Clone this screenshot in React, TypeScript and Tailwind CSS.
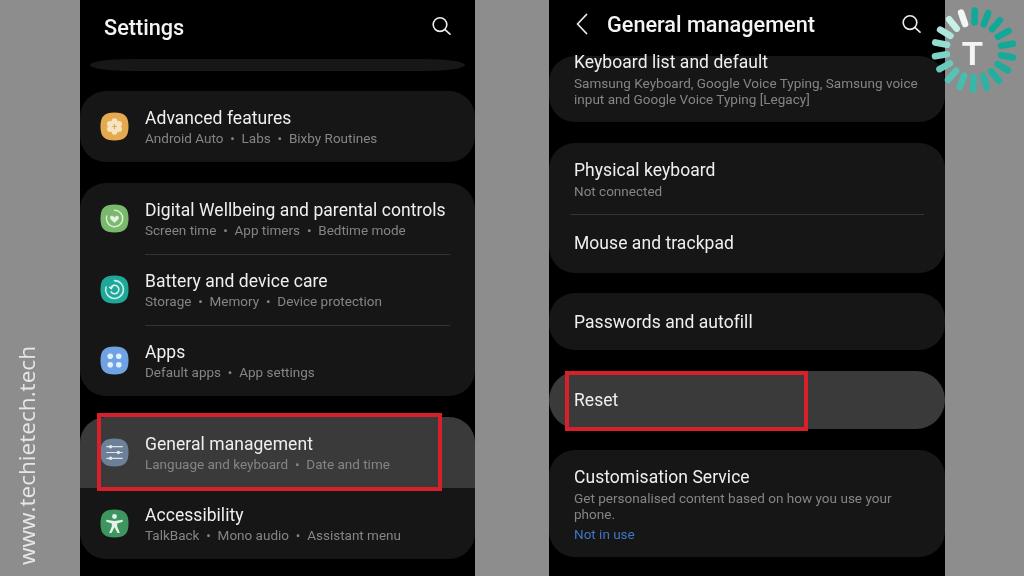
import React from "react";

const Search = () => (
  <svg width="19" height="18" viewBox="0 0 19 18" fill="none" stroke="#ededed" strokeWidth="1.6" strokeLinecap="round">
    <circle cx="8" cy="7.6" r="6.8" />
    <path d="M13 12.6l5 4.6" />
  </svg>
);

const Squircle = ({ color, children }: { color: string; children: React.ReactNode }) => (
  <svg width="29" height="29" viewBox="0 0 30 30" className="shrink-0">
    <path d="M15 0.5C25.5 0.5 29.5 4.5 29.5 15S25.5 29.5 15 29.5 0.5 25.5 0.5 15 4.5 0.5 15 0.5Z" fill={color} />
    {children}
  </svg>
);

const Advanced = () => (
  <Squircle color="#e5a94f">
    <g fill="#f6e3c0">
      <circle cx="15" cy="9.6" r="3.1" />
      <circle cx="15" cy="20.4" r="3.1" />
      <circle cx="10.3" cy="12.3" r="3.1" />
      <circle cx="19.7" cy="12.3" r="3.1" />
      <circle cx="10.3" cy="17.7" r="3.1" />
      <circle cx="19.7" cy="17.7" r="3.1" />
      <circle cx="15" cy="15" r="4" />
    </g>
    <path d="M15 12.5v5M12.5 15h5" stroke="#d9a95a" strokeWidth="1.1" />
  </Squircle>
);
const Wellbeing = () => (
  <Squircle color="#79b86d">
    <path d="M15 6.5a8.5 8.5 0 1 1-8.1 6" fill="none" stroke="#d8edd2" strokeWidth="1.6" strokeLinecap="round" />
    <path d="M15 19.6l-4-3.9c-1.9-2.1 1-4.8 3-2.8l1 1 1-1c2-2 4.9.7 3 2.8z" fill="#e4f2e0" />
  </Squircle>
);
const Battery = () => (
  <Squircle color="#1fa898">
    <path d="M15 5.8a9.2 9.2 0 1 1-8.8 6.6" fill="none" stroke="#c9efe9" strokeWidth="1.6" strokeLinecap="round" />
    <path d="M11.2 13a4.4 4.4 0 1 1 .2 4.4" fill="none" stroke="#d9f5f0" strokeWidth="1.6" strokeLinecap="round" />
    <path d="M9.8 12.6l2 1.6 1.2-2.4" fill="none" stroke="#d9f5f0" strokeWidth="1.3" strokeLinecap="round" />
  </Squircle>
);
const Apps = () => (
  <Squircle color="#6fa2e2">
    <g fill="#e3eefb">
      <circle cx="10.6" cy="10.6" r="2.9" />
      <circle cx="19.4" cy="10.6" r="2.9" />
      <circle cx="10.6" cy="19.4" r="2.9" />
      <circle cx="19.4" cy="19.4" r="2.9" />
    </g>
  </Squircle>
);
const General = () => (
  <Squircle color="#6c8098">
    <g stroke="#dfe5ec" strokeWidth="1.2" strokeLinecap="round" fill="#dfe5ec">
      <path d="M7 9h16M7 15h16M7 21h16" fill="none" />
      <circle cx="11" cy="9" r="1.2" />
      <circle cx="19" cy="15" r="1.2" />
      <circle cx="11" cy="21" r="1.2" />
    </g>
  </Squircle>
);
const Access = () => (
  <Squircle color="#3e9560">
    <circle cx="15" cy="7.8" r="2.5" fill="#e4f2e8" />
    <path d="M6.5 11l8.5 1.5 8.5-1.5v2.2l-5.7 1.8v3.2l2.7 6.6h-2.4L15 18.9l-3.100 5.900H9.500l2.700-6.600V15L6.500 13.200z" fill="#e4f2e8" />
  </Squircle>
);

const Sub = ({ items }: { items: string[] }) => (
  <div className="text-[13.5px] leading-[16px] text-[#858585] whitespace-nowrap mt-[1px]">
    {items.map((t, i) => (
      <span key={t}>
        {i > 0 && <span className="mx-[6.8px]">•</span>}
        {t}
      </span>
    ))}
  </div>
);

const IconRow = ({
  icon,
  title,
  items,
  active,
}: {
  icon: React.ReactNode;
  title: string;
  items: string[];
  active?: boolean;
}) => (
  <div className={`h-[71px] flex items-center gap-[16px] pl-[20px] ${active ? "bg-[#3a3a3a] rounded-t-[26px]" : ""}`}>
    {icon}
    <div>
      <div className="text-[17.5px] leading-[22px] text-[#efefef] tracking-[0.05px]">{title}</div>
      <Sub items={items} />
    </div>
  </div>
);

const Line = ({ cls }: { cls: string }) => <div className={`h-[1px] -mb-[1px] bg-[#333333] ${cls}`} />;

const Ticks = () => {
  const n = 18;
  const ticks = Array.from({ length: n }, (_, i) => {
    const a = ((i * 20 + 1) * Math.PI) / 180;
    const t = Math.max(0, (i - 3) / (n - 5));
    const c =
      i === n - 1
        ? "#f1f5f4"
        : `rgb(${Math.round(18 + 180 * t * t)},${Math.round(168 + 72 * t * t)},${Math.round(152 + 80 * t * t)})`;
    return (
      <line
        key={i}
        x1={45 + 27.5 * Math.sin(a)}
        y1={45 - 27.5 * Math.cos(a)}
        x2={45 + 39.5 * Math.sin(a)}
        y2={45 - 39.5 * Math.cos(a)}
        stroke={c}
        strokeWidth="6.6"
        strokeLinecap="round"
      />
    );
  });
  return (
    <svg width="90" height="90" viewBox="0 0 90 90">
      {ticks}
      <text x="43.5" y="59.5" textAnchor="middle" fontSize="34" fontWeight="700" fill="#f4f4f4" fontFamily="'Liberation Sans', sans-serif">
        T
      </text>
    </svg>
  );
};

export default function App() {
  return (
    <div className="relative w-[1024px] h-[576px] overflow-hidden flex bg-[#8d8d8d] font-['Roboto',sans-serif] blur-[0.35px]">
      <div className="w-[80px] shrink-0 flex items-end pl-[15px] pb-[11px]">
        <div className="[writing-mode:vertical-rl] rotate-180 text-[22.6px] leading-[24px] text-[#e6e6e6] font-['Open_Sans',sans-serif] whitespace-nowrap">
          www.techietech.tech
        </div>
      </div>

      <div className="w-[395px] shrink-0 bg-black flex flex-col">
        <div className="h-[59px] shrink-0 flex items-start justify-between pl-[24px] pr-[24px] pt-[13px]">
          <div className="text-[21.7px] leading-[30px] font-medium text-[#f4f4f4]">Settings</div>
          <div className="pt-[4px]"><Search /></div>
        </div>
        <div className="h-[12px] mx-[10px] bg-[#171717] rounded-[40px/6px]" />
        <div className="mt-[20px] rounded-[26px] bg-[#161616]">
          <IconRow icon={<Advanced />} title="Advanced features" items={["Android Auto", "Labs", "Bixby Routines"]} />
        </div>
        <div className="mt-[21px] rounded-[26px] bg-[#161616]">
          <IconRow icon={<Wellbeing />} title="Digital Wellbeing and parental controls" items={["Screen time", "App timers", "Bedtime mode"]} />
          <Line cls="ml-[65px] mr-[25px]" />
          <IconRow icon={<Battery />} title="Battery and device care" items={["Storage", "Memory", "Device protection"]} />
          <Line cls="ml-[65px] mr-[25px]" />
          <IconRow icon={<Apps />} title="Apps" items={["Default apps", "App settings"]} />
        </div>
        <div className="mt-[21px] rounded-[26px] bg-[#161616]">
          <IconRow active icon={<General />} title="General management" items={["Language and keyboard", "Date and time"]} />
          <IconRow icon={<Access />} title="Accessibility" items={["TalkBack", "Mono audio", "Assistant menu"]} />
        </div>
      </div>

      <div className="w-[74px] shrink-0" />

      <div className="w-[396px] shrink-0 bg-black flex flex-col">
        <div className="h-[56px] shrink-0 flex items-start pl-[27px] pr-[24px] pt-[10px]">
          <svg width="12" height="22" viewBox="0 0 12 22" fill="none" stroke="#e8e8e8" strokeWidth="1.8" strokeLinecap="round" strokeLinejoin="round" className="mt-[3px]">
            <path d="M10.5 1.5L1.5 11l9 9.5" />
          </svg>
          <div className="ml-[19px] text-[21.7px] leading-[30px] font-medium text-[#f4f4f4]">General management</div>
          <div className="ml-auto pt-[5px]"><Search /></div>
        </div>

        <div className="h-[66px] shrink-0 rounded-[26px] bg-[#161616] flex flex-col justify-end px-[25px] pb-[15px]">
          <div className="text-[17.5px] leading-[22px] text-[#efefef] tracking-[0.05px] mb-[3px]">Keyboard list and default</div>
          <div className="text-[13.55px] leading-[15.5px] text-[#858585]">
            Samsung Keyboard, Google Voice Typing, Samsung voice<br />input and Google Voice Typing [Legacy]
          </div>
        </div>

        <div className="mt-[21px] rounded-[26px] bg-[#161616]">
          <div className="h-[71px] flex flex-col justify-center px-[25px]">
            <div className="text-[17.5px] leading-[22px] text-[#efefef] tracking-[0.05px]">Physical keyboard</div>
            <div className="text-[13.5px] leading-[16px] text-[#858585] mt-[2px]">Not connected</div>
          </div>
          <Line cls="mx-[21px]" />
          <div className="h-[59px] flex items-center px-[25px] pb-[1px] text-[17.5px] text-[#efefef] tracking-[0.05px]">Mouse and trackpad</div>
        </div>

        <div className="mt-[20px] h-[57px] rounded-[26px] bg-[#161616] flex items-center px-[25px] pt-[1px] text-[17.5px] text-[#efefef] tracking-[0.05px]">
          Passwords and autofill
        </div>
        <div className="mt-[21px] h-[58px] rounded-[29px] bg-[#3a3a3a] flex items-center px-[25px] pt-[1px] text-[17.5px] text-[#efefef] tracking-[0.05px]">
          Reset
        </div>
        <div className="mt-[21px] h-[107px] rounded-[26px] bg-[#161616] px-[25px] pt-[16px]">
          <div className="text-[17.5px] leading-[22px] text-[#efefef] tracking-[0.05px]">Customisation Service</div>
          <div className="text-[13.55px] leading-[16px] text-[#858585] mt-[2px]">
            Get personalised content based on how you use your<br />phone.
          </div>
          <div className="text-[13.5px] leading-[16px] text-[#3f76c4] mt-[4px]">Not in use</div>
        </div>
      </div>

      <div className="absolute left-[97px] top-[413px] w-[345px] h-[78px] border-[4px] border-[#d8202b]" />
      <div className="absolute left-[565px] top-[371px] w-[243px] h-[60px] border-[4px] border-[#d8202b]" />
      <div className="absolute left-[929px] top-[5px]"><Ticks /></div>
    </div>
  );
}
